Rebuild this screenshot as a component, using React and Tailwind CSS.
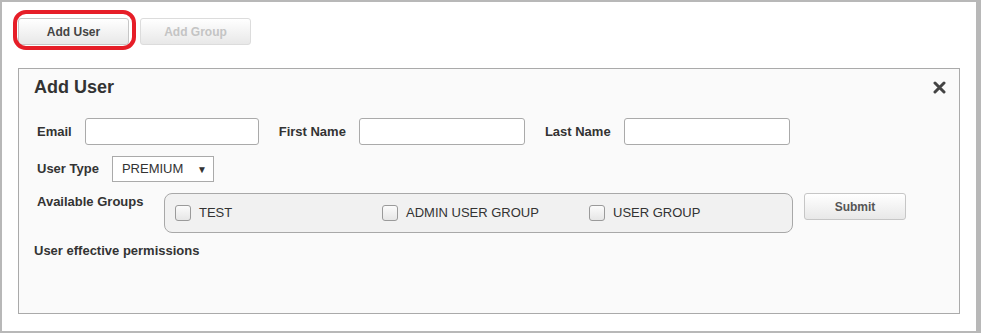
import React from 'react'

const groups = ['TEST', 'ADMIN USER GROUP', 'USER GROUP']

function Button({ children, disabled, className = '' }) {
  return (
    <button
      disabled={disabled}
      className={`h-[27px] rounded-[3px] border text-[12px] font-bold bg-gradient-to-b from-white to-[#e8e8e8] ${
        disabled ? 'border-[#dcdcdc] text-[#c4c4c4]' : 'border-[#c6c6c6] text-[#444]'
      } ${className}`}
    >
      {children}
    </button>
  )
}

function Label({ children, className = '' }) {
  return <span className={`text-[13px] font-bold text-[#333] ${className}`}>{children}</span>
}

function TextInput({ width }) {
  return <input type="text" className={`h-[27px] ${width} rounded-[3px] border border-[#aaa] bg-white outline-none`} />
}

export default function App() {
  return (
    <div
      className="w-[981px] h-[333px] bg-white border-t-2 border-l-2 border-b-2 border-r-[5px] border-[#b8b8b8] pt-4 pl-4"
      style={{ fontFamily: '"Liberation Sans", Arial, sans-serif' }}
    >
      {/* Top actions */}
      <div className="flex gap-[11px]">
        <div className="relative">
          <Button className="w-[111px]">Add User</Button>
          <span className="pointer-events-none absolute -left-[5px] -right-[7px] -top-[8px] -bottom-[5px] rounded-[13px] border-4 border-[#e61e28]"></span>
        </div>
        <Button disabled className="w-[111px]">Add Group</Button>
      </div>

      {/* Add User panel */}
      <div className="mt-[23px] w-[942px] h-[246px] border border-[#aaa] bg-[#fafafa] pt-2 pl-[15px] pr-[13px] text-[#333]">
        <div className="flex items-center justify-between h-[21px]">
          <h2 className="text-[18px] font-bold leading-[21px] text-[#333]">Add User</h2>
          <svg width="13" height="13" viewBox="0 0 13 13" className="mt-[-1px]">
            <path d="M2 2 L11 11 M11 2 L2 11" stroke="#444" strokeWidth="3" strokeLinecap="round" />
          </svg>
        </div>

        <div className="pl-[3px]">
          <div className="mt-[20px] flex items-center">
            <Label className="mr-[13px]">Email</Label>
            <TextInput width="w-[174px]" />
            <Label className="ml-[20px] mr-[13px]">First Name</Label>
            <TextInput width="w-[166px]" />
            <Label className="ml-[20px] mr-[13px]">Last Name</Label>
            <TextInput width="w-[166px]" />
          </div>

          <div className="mt-[11px] flex items-center">
            <Label className="mr-[13px]">User Type</Label>
            <div className="h-[26px] w-[102px] border border-[#aaa] bg-white flex items-center justify-between pl-[9px] pr-[6px]">
              <span className="text-[13px] text-[#333]">PREMIUM</span>
              <span className="text-[10px] text-[#333]">▼</span>
            </div>
          </div>

          <div className="mt-[11px] flex items-start">
            <Label className="mt-[1px] w-[127px] leading-[15px]">Available Groups</Label>
            <div className="h-[40px] w-[629px] rounded-[8px] border border-[#a8a8a8] bg-[#f1f1f1] flex items-center pl-[10px]">
              {groups.map(g => (
                <label key={g} className="w-[207px] shrink-0 flex items-center gap-2">
                  <span className="h-4 w-4 shrink-0 rounded-[3px] border border-[#9a9a9a] bg-gradient-to-b from-[#fbfbfb] to-[#e6e6e6]"></span>
                  <span className="text-[13px] text-[#333]">{g}</span>
                </label>
              ))}
            </div>
            <Button className="ml-[11px] w-[102px] text-[#555]">Submit</Button>
          </div>
        </div>

        <div className="mt-[10px] text-[13px] font-bold leading-[15px] text-[#333]">User effective permissions</div>
      </div>
    </div>
  )
}
